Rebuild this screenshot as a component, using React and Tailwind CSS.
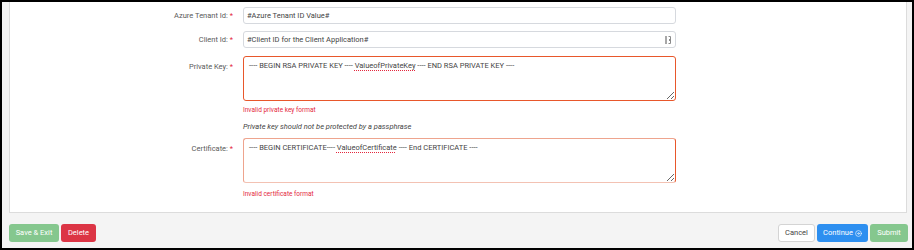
import { CircleArrowRight } from "lucide-react";

function Label({ children, top }) {
  return (
    <div className={`w-[223px] shrink-0 text-right text-[7.5px] text-[#5a5a5a] ${top ? "pt-[5px]" : "self-center"}`}>
      {children} <span className="text-[#e4273d]">*</span>
    </div>
  );
}

function Typo({ children }) {
  return (
    <span className="underline decoration-dotted decoration-[#e4273d] underline-offset-[1.5px]">{children}</span>
  );
}

export default function App() {
  return (
    <div className="w-[914px] h-[250px] border-2 border-black bg-[#f4f4f4] overflow-hidden font-['Roboto',sans-serif]">
      {/* form panel */}
      <div className="ml-[7px] mr-[5px] h-[211px] bg-white border border-t-0 border-[#dcdcdc] pt-[5px] flex flex-col">
        <div className="flex gap-[10px] items-center">
          <Label>Azure Tenant Id:</Label>
          <div className="w-[433px] h-[17px] border border-[#d6d9de] rounded-[3px] px-[3px] flex items-center text-[7.5px] text-[#444]">
            #Azure Tenant ID Value#
          </div>
        </div>

        <div className="flex gap-[10px] items-center mt-[7px]">
          <Label>Client Id:</Label>
          <div className="w-[433px] h-[17px] border border-[#d6d9de] rounded-[3px] px-[3px] flex items-center justify-between text-[7.5px] text-[#444]">
            <span>#Client ID for the Client Application#</span>
            <svg width="7" height="8" viewBox="0 0 7 8">
              <rect x="0" y="0" width="2" height="8" fill="#a8a8a8" />
              <path d="M3.5 0.5 H5.5 V7.5 H3.5" fill="none" stroke="#8a8a8a" strokeWidth="1" />
              <rect x="4" y="3" width="1" height="2" fill="#8a8a8a" />
            </svg>
          </div>
        </div>

        <div className="flex gap-[10px] mt-[8px]">
          <Label top>Private Key:</Label>
          <div className="flex flex-col">
            <div className="w-[433px] h-[45px] border border-[#e8572b] rounded-[3px] px-[5px] py-[4px] text-[7.5px] leading-[10px] text-[#444] resize-y overflow-auto">
              ---- BEGIN RSA PRIVATE KEY ---- <Typo>ValueofPrivateKey</Typo> ---- END RSA PRIVATE KEY ----
            </div>
            <div className="mt-[5px] text-[6.5px] text-[#e4273d]">Invalid private key format</div>
            <div className="mt-[5px] text-[7.5px] italic text-[#444]">Private key should not be protected by a passphrase</div>
          </div>
        </div>

        <div className="flex gap-[10px] mt-[6px]">
          <Label top>Certificate:</Label>
          <div className="flex flex-col">
            <div className="w-[433px] h-[45px] border border-[#eea48e] border-r-[#e8572b] border-b-[#f3c2b3] rounded-[3px] px-[5px] py-[4px] text-[7.5px] leading-[10px] text-[#444] resize-y overflow-auto">
              ---- BEGIN CERTIFICATE---- <Typo>ValueofCertificate</Typo> ---- End CERTIFICATE ----
            </div>
            <div className="mt-[7px] text-[6.5px] text-[#e4273d]">Invalid certificate format</div>
          </div>
        </div>
      </div>

      {/* footer buttons */}
      <div className="mt-[11px] ml-[7px] mr-[4px] flex items-center">
        <button className="h-[18px] w-[50px] rounded-[3px] bg-[#85c78e] text-white text-[7.5px]">Save &amp; Exit</button>
        <button className="ml-[2px] h-[18px] w-[35px] rounded-[3px] bg-[#dc3545] text-white text-[7.5px]">Delete</button>
        <div className="flex-1" />
        <button className="h-[18px] w-[37px] rounded-[3px] bg-white border border-[#d4d4d4] text-[#444] text-[7.5px]">Cancel</button>
        <button className="ml-[2px] h-[18px] w-[51px] rounded-[3px] bg-[#2d8ff0] text-white text-[7.5px] flex items-center justify-center gap-[2px]">
          Continue <CircleArrowRight size={7} strokeWidth={2} />
        </button>
        <button className="ml-[2px] h-[18px] w-[38px] rounded-[3px] bg-[#85c78e] text-white text-[7.5px]">Submit</button>
      </div>
    </div>
  );
}
